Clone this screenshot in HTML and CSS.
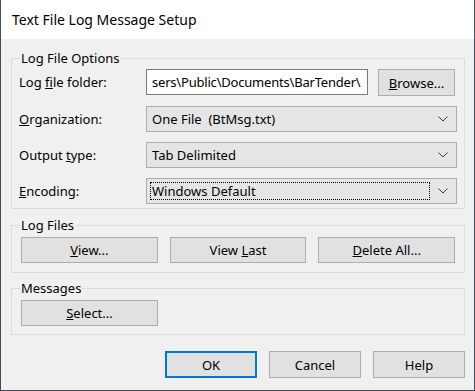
FILE: index.html
```html
<!DOCTYPE html>
<html lang="en">

<head>
    <meta charset="UTF-8">
    <meta name="viewport" content="width=device-width, initial-scale=1.0">
    <title>Text File Log Message Setup</title>
    <link rel="stylesheet" href="styles.css">
</head>

<body>
    <div class="window">
        <div class="titlebar">Text File Log Message Setup</div>
        <div class="content">
            <fieldset class="group options">
                <legend>Log File Options</legend>
                <div class="row row-folder">
                    <label class="field-label">Log <u>f</u>ile folder:</label>
                    <div class="textbox">sers\Public\Documents\BarTender\</div>
                    <button class="btn browse"><u>B</u>rowse...</button>
                </div>
                <div class="row">
                    <label class="field-label"><u>O</u>rganization:</label>
                    <div class="combo">
                        <span class="combo-value">One File  (BtMsg.txt)</span>
                        <span class="combo-arrow"><svg width="10" height="6" viewBox="0 0 10 6"><polyline points="0.5,0.5 5,5 9.5,0.5" fill="none" stroke="#3c3c3c" stroke-width="1"/></svg></span>
                    </div>
                </div>
                <div class="row">
                    <label class="field-label">Output <u>t</u>ype:</label>
                    <div class="combo">
                        <span class="combo-value">Tab Delimited</span>
                        <span class="combo-arrow"><svg width="10" height="6" viewBox="0 0 10 6"><polyline points="0.5,0.5 5,5 9.5,0.5" fill="none" stroke="#3c3c3c" stroke-width="1"/></svg></span>
                    </div>
                </div>
                <div class="row">
                    <label class="field-label"><u>E</u>ncoding:</label>
                    <div class="combo">
                        <span class="combo-value focused">Windows Default</span>
                        <span class="combo-arrow"><svg width="10" height="6" viewBox="0 0 10 6"><polyline points="0.5,0.5 5,5 9.5,0.5" fill="none" stroke="#3c3c3c" stroke-width="1"/></svg></span>
                    </div>
                </div>
            </fieldset>

            <fieldset class="group log-files">
                <legend>Log Files</legend>
                <div class="button-row">
                    <button class="btn wide"><u>V</u>iew...</button>
                    <button class="btn wide">View <u>L</u>ast</button>
                    <button class="btn wide"><u>D</u>elete All...</button>
                </div>
            </fieldset>

            <fieldset class="group messages">
                <legend>Messages</legend>
                <div class="button-row">
                    <button class="btn wide"><u>S</u>elect...</button>
                </div>
            </fieldset>

            <div class="footer">
                <button class="btn dialog default">OK</button>
                <button class="btn dialog">Cancel</button>
                <button class="btn dialog">Help</button>
            </div>
        </div>
    </div>
</body>

</html>
```

FILE: styles.css
```css
body {
    margin: 0;
    padding: 0;
    background-color: #f0f0f0;
}

.window {
    width: 475px;
    height: 391px;
    box-sizing: border-box;
    border: 1px solid #434b57;
    border-top: none;
    background-color: #f0f0f0;
    font-family: "Noto Sans", sans-serif;
    font-size: 13px;
    color: #000;
}

.titlebar {
    height: 39px;
    background: white;
    padding-left: 11px;
    display: flex;
    align-items: center;
    font-size: 14px;
}

.content {
    padding: 9px 9px 0 10px;
}

.group {
    margin: 0;
    min-width: 0;
    border: 1px solid #dcdcdc;
    padding: 2px 9px 9px 9px;
}

.group legend {
    padding: 0 1px;
    margin-left: -1px;
    line-height: 20px;
}

.options {
    padding: 1px 6px 4px 7px;
}

.options legend {
    margin-left: 1px;
}

.log-files {
    margin-top: 6px;
}

.messages {
    margin-top: 5px;
    padding-bottom: 8px;
}

.row {
    display: flex;
    align-items: center;
    height: 26px;
}

.row + .row {
    margin-top: 10px;
}

.row-folder {
    height: 27px;
    align-items: flex-start;
}

.row-folder .field-label {
    line-height: 26px;
}

.field-label {
    width: 127px;
    flex-shrink: 0;
}

.textbox {
    width: 222px;
    height: 26px;
    box-sizing: border-box;
    border: 1px solid #7a7a7a;
    background: white;
    padding-left: 5px;
    line-height: 24px;
    letter-spacing: -0.2px;
    white-space: nowrap;
    overflow: hidden;
}

.btn {
    box-sizing: border-box;
    border: 1px solid #adadad;
    background-color: #e1e1e1;
    font-family: inherit;
    font-size: 13px;
    color: #000;
    padding: 0;
    margin: 0;
}

.browse {
    margin-left: 10px;
    width: 77px;
    height: 27px;
}

.combo {
    width: 311px;
    height: 26px;
    box-sizing: border-box;
    border: 1px solid #adadad;
    background-color: #e5e5e5;
    padding: 3px;
    display: flex;
    align-items: stretch;
}

.combo-value {
    flex: 1;
    border: 1px dotted transparent;
    padding-left: 1px;
    line-height: 16px;
    white-space: pre;
}

.combo-value.focused {
    border-color: #000;
}

.combo-arrow {
    width: 21px;
    display: flex;
    align-items: center;
    justify-content: center;
    padding-left: 2px;
}

.button-row {
    display: flex;
    gap: 12px;
}

.wide {
    width: 137px;
    height: 26px;
}

.footer {
    margin-top: 16px;
    display: flex;
    justify-content: flex-end;
    gap: 12px;
}

.dialog {
    width: 92px;
    height: 27px;
}

.dialog.default {
    border: 2px solid #0078d7;
}
```
